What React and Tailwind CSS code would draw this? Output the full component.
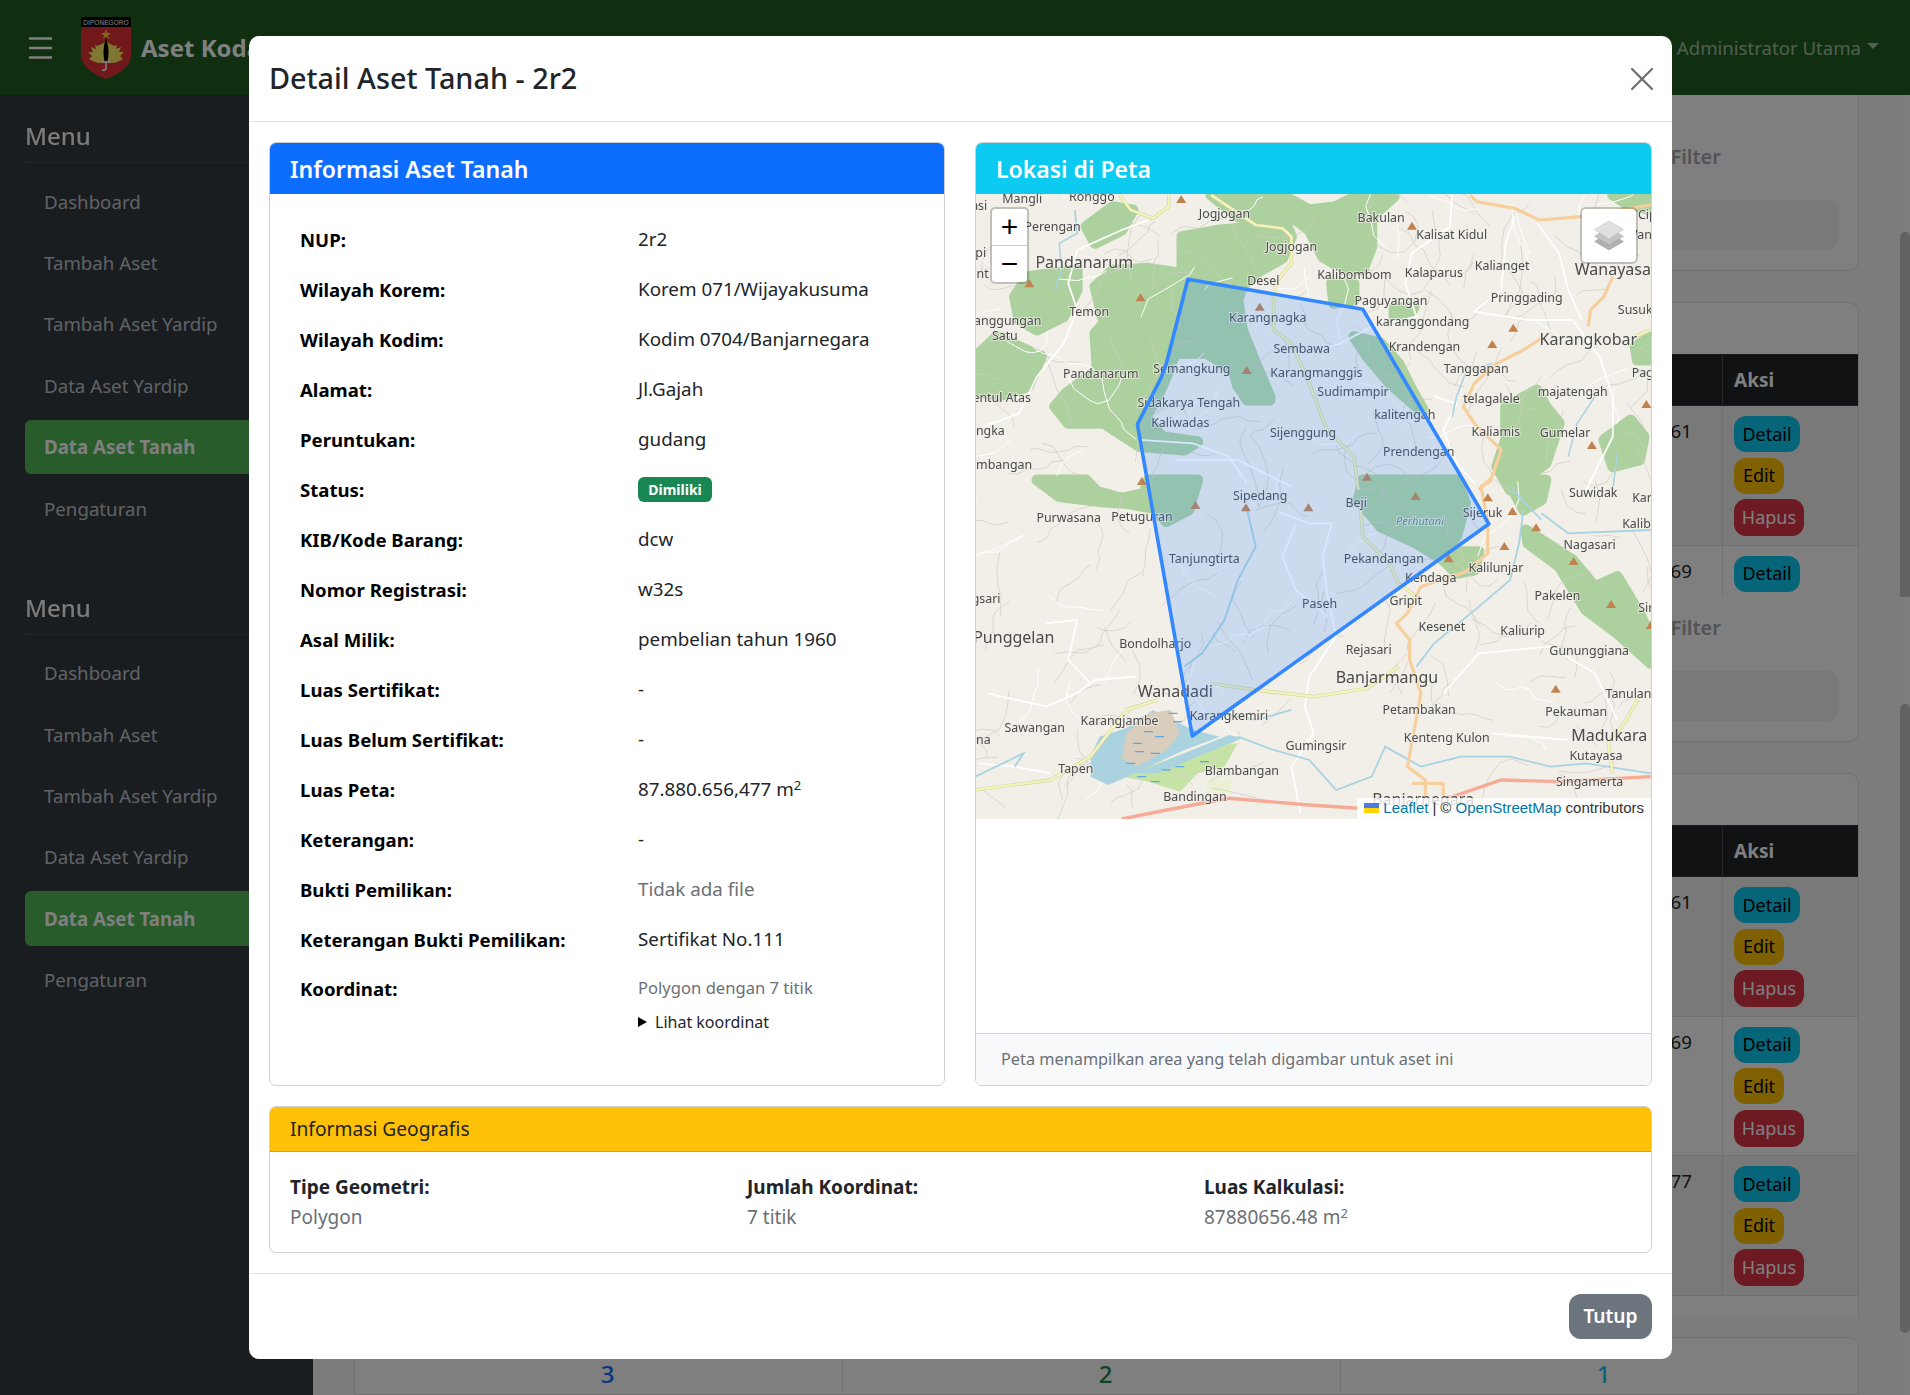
import React from 'react';
import { X } from 'lucide-react';

const menuItems = ['Dashboard', 'Tambah Aset', 'Tambah Aset Yardip', 'Data Aset Yardip', 'Data Aset Tanah', 'Pengaturan'];

const detailRows = [
  ['NUP:', '2r2'],
  ['Wilayah Korem:', 'Korem 071/Wijayakusuma'],
  ['Wilayah Kodim:', 'Kodim 0704/Banjarnegara'],
  ['Alamat:', 'Jl.Gajah'],
  ['Peruntukan:', 'gudang'],
  ['Status:', 'badge'],
  ['KIB/Kode Barang:', 'dcw'],
  ['Nomor Registrasi:', 'w32s'],
  ['Asal Milik:', 'pembelian tahun 1960'],
  ['Luas Sertifikat:', '-'],
  ['Luas Belum Sertifikat:', '-'],
  ['Luas Peta:', 'luas'],
  ['Keterangan:', '-'],
  ['Bukti Pemilikan:', 'nofile'],
  ['Keterangan Bukti Pemilikan:', 'Sertifikat No.111'],
];

// map helpers: the labels were read off two crops of the map
const x = (zx) => 970 + zx / 2.24;
const y2 = (zy) => 130 + zy / 3;
const y3 = (zy) => 480 + zy / 3;
const M2 = 'matrix(0.4464 0 0 0.3333 970 130)';
const M3 = 'matrix(0.4464 0 0 0.3333 970 480)';

const labels2 = [
  [117, 208, 'Mangli'], [273, 200, 'Ronggo'], [570, 253, 'Jogjogan'], [921, 264, 'Bakulan'], [1079, 315, 'Kalisat Kidul'],
  [185, 292, 'Perengan'], [720, 352, 'Jogjogan'], [861, 435, 'Kalibombom'], [1039, 430, 'Kalaparus'], [1192, 407, 'Kalianget'],
  [657, 452, 'Desel'], [943, 513, 'Paguyangan'], [1247, 505, 'Pringgading'], [267, 546, 'Temon'], [78, 572, 'Tanggungan'],
  [78, 619, 'Satu'], [1014, 575, 'karanggondang'], [667, 565, 'Karangnagka'], [1490, 541, 'Susuk'], [743, 658, 'Sembawa'],
  [1018, 651, 'Krandengan'], [1134, 716, 'Tanggapan'], [497, 716, 'Semangkung'], [776, 729, 'Karangmanggis'], [293, 733, 'Pandanarum'],
  [858, 787, 'Sudimampir'], [1350, 787, 'majatengah'], [1168, 808, 'telagalele'], [490, 818, 'Sidakarya Tengah'], [62, 803, 'Bentul Atas'],
  [974, 855, 'kalitengah'], [471, 878, 'Kaliwadas'], [746, 910, 'Sijenggung'], [1178, 906, 'Kaliamis'], [1333, 908, 'Gumelar'],
  [30, 903, 'Tungka'], [1005, 965, 'Prendengan'], [60, 1005, 'Kembangan'], [1522, 730, 'Pagak'], [1530, 255, 'Cipta'], [1530, 315, 'Wanasari'],
  [12, 228, 'Kasi'], [12, 368, 'Pipi'], [12, 432, 'Kent'],
];
const big2 = [[256, 395, 'Pandanarum'], [1440, 417, 'Wanayasa'], [1385, 628, 'Karangkobar']];
const labels3 = [
  [650, 47, 'Sipedang'], [1396, 40, 'Suwidak'], [865, 68, 'Beji'], [221, 115, 'Purwasana'], [385, 110, 'Petuguran'],
  [1148, 98, 'Sijeruk'], [1530, 132, 'Kalibening'], [1530, 55, 'Karang'], [1388, 195, 'Nagasari'], [525, 237, 'Tanjungtirta'],
  [927, 238, 'Pekandangan'], [1178, 263, 'Kalilunjar'], [1032, 295, 'Kendaga'], [1316, 348, 'Pakelen'], [976, 363, 'Gripit'],
  [20, 357, 'Pagsari'], [783, 373, 'Paseh'], [1057, 440, 'Kesenet'], [1238, 452, 'Kaliurip'], [415, 492, 'Bondolharjo'],
  [893, 511, 'Rejasari'], [1387, 512, 'Gununggiana'], [1475, 643, 'Tanulan'], [1006, 690, 'Petambakan'], [1358, 697, 'Pekauman'],
  [580, 707, 'Karangkemiri'], [335, 722, 'Karangjambe'], [145, 745, 'Sawangan'], [1068, 775, 'Kenteng Kulon'], [775, 798, 'Gumingsir'],
  [12, 780, 'Gana'], [1402, 828, 'Kutayasa'], [237, 868, 'Tapen'], [609, 873, 'Blambangan'], [1388, 905, 'Singamerta'], [504, 950, 'Bandingan'],
  [1530, 385, 'Sirau'],
];
const big3 = [[98, 470, 'Punggelan'], [934, 590, 'Banjarmangu'], [460, 633, 'Wanadadi'], [1432, 765, 'Madukara'], [1015, 958, 'Banjarnegara']];

const peaks = [
  [473, 207, 2], [990, 287, 2], [133, 460, 2], [382, 502, 2], [649, 530, 2], [1217, 593, 2], [1170, 642, 2], [620, 720, 2], [1515, 822, 2], [1393, 945, 2], [889, 1040, 2], [385, 1053, 2],
  [505, 75, 3], [618, 82, 3], [758, 82, 3], [998, 48, 3], [1160, 52, 3], [1215, 93, 3], [1268, 142, 3], [1197, 198, 3], [1072, 235, 3], [1352, 243, 3], [1436, 372, 3], [1312, 626, 3], [1525, 435, 3],
];

const forest2 = [
  'M475 320 L560 300 L640 290 L700 255 L720 320 L700 385 L640 430 L610 470 L600 510 L610 600 L640 700 L672 800 L600 770 L590 720 L530 670 L460 670 L440 740 L420 800 L395 860 L430 920 L510 935 L480 960 L380 950 L300 880 L220 880 L190 830 L215 790 L285 720 L280 610 L300 580 L280 470 L320 420 L400 415 L475 430 Z',
  'M130 440 L240 420 L240 480 L210 560 L150 600 L110 570 L100 500 Z',
  'M260 290 L320 230 L365 240 L340 300 L280 340 Z',
  'M540 195 L700 195 L760 240 L720 260 L660 290 L600 260 Z',
  'M820 230 L870 195 L950 200 L900 260 L900 350 L880 420 L840 420 L790 380 L760 300 L720 260 L760 240 Z',
  'M810 460 L860 460 L860 510 L815 520 Z',
  'M950 535 L995 530 L985 560 L950 560 Z',
  'M860 620 L920 640 L960 700 L990 780 L1020 850 L1000 830 L940 760 L890 680 Z',
  'M1200 830 L1270 780 L1290 830 L1320 880 L1290 1000 L1210 1080 L1180 1010 L1200 930 Z',
  'M1420 930 L1480 870 L1510 920 L1500 990 L1440 1010 Z',
  'M12 680 L60 620 L160 680 L130 770 L60 800 L12 780 Z',
  'M1440 195 L1525 195 L1525 240 L1470 220 Z',
  'M1490 650 L1525 620 L1525 690 L1495 690 Z',
  'M600 765 L650 770 L672 810 L620 810 Z',
];
const forest3 = [
  'M150 0 L260 0 L285 35 L340 55 L390 40 L400 0 L510 0 L490 90 L440 125 L410 85 L350 70 L290 65 L200 50 Z',
  'M880 0 L1090 0 L1110 70 L1090 170 L1060 215 L1140 215 L1130 270 L1090 280 L1060 240 L1000 190 L920 140 L870 60 Z',
  'M1245 150 L1350 240 L1400 320 L1450 290 L1500 400 L1525 470 L1525 550 L1450 460 L1380 390 L1320 260 L1250 190 Z',
  'M1205 0 L1290 0 L1280 60 L1240 90 Z',
];

// the tile has a dense net of village tracks, no need to trace them one by one
function makeTracks(count, seed, step) {
  let s = seed;
  const rnd = () => {
    s = (s * 16807) % 2147483647;
    return s / 2147483647;
  };
  const out = [];
  for (let i = 0; i < count; i++) {
    let px = 976 + rnd() * 675;
    let py = 194 + rnd() * 625;
    let dir = rnd() * Math.PI * 2;
    let d = `M${px.toFixed(1)} ${py.toFixed(1)}`;
    const n = 3 + Math.floor(rnd() * 4);
    for (let j = 0; j < n; j++) {
      dir += (rnd() - 0.5) * 1.5;
      const len = step * (0.5 + rnd());
      px += Math.cos(dir) * len;
      py += Math.sin(dir) * len;
      d += ` L${px.toFixed(1)} ${py.toFixed(1)}`;
    }
    out.push(d);
  }
  return out;
}
const grayTracks = makeTracks(190, 4711, 12);
const whiteTracks = makeTracks(50, 9127, 13);

const MapDrawing = () => (
  <svg viewBox="976 194 675 625" className="w-[675px] h-[625px] block blur-[0.3px]">
    <rect x="976" y="194" width="675" height="625" fill="#f2efe9" />

    {/* forest */}
    <g transform={M2} fill="#add19e" stroke="#add19e" strokeWidth="11" strokeLinejoin="round">
      {forest2.map((d, i) => <path key={i} d={d} vectorEffect="non-scaling-stroke" />)}
    </g>
    <g transform={M3} fill="#add19e" stroke="#add19e" strokeWidth="11" strokeLinejoin="round">
      {forest3.map((d, i) => <path key={i} d={d} vectorEffect="non-scaling-stroke" />)}
    </g>
    <g transform={M3}>
      <path d="M340 890 L420 850 L520 800 L600 790 L570 860 L510 880 L470 935 L400 905 Z" fill="#c6e3a6" />
      <path d="M530 900 L585 900 L585 940 L530 940 Z" fill="#eef0d5" />
    </g>

    {/* village tracks */}
    <g fill="none" stroke="#cfcbc3" strokeWidth="0.7">
      {grayTracks.map((d, i) => <path key={i} d={d} />)}
    </g>
    <g fill="none" stroke="#ffffff" strokeWidth="1">
      {whiteTracks.map((d, i) => <path key={i} d={d} />)}
    </g>

    {/* small roads */}
    <g transform={M2} fill="none" stroke="#ffffff" strokeWidth="1.8">
      <path vectorEffect="non-scaling-stroke" d="M400 270 L340 300 L240 360 L220 460 L240 540 L210 640 L150 740 L110 850 L30 890" />
      <path vectorEffect="non-scaling-stroke" d="M1080 195 L1075 290 L990 370 L975 460 L1000 560 L900 590 L830 640 L760 670" />
      <path vectorEffect="non-scaling-stroke" d="M1220 260 L1200 340 L1190 480 L1130 545 L1250 570 L1350 570 L1410 680 L1440 800 L1440 920 L1380 1080" />
      <path vectorEffect="non-scaling-stroke" d="M1270 280 L1320 370 L1340 480 L1370 570" />
      <path vectorEffect="non-scaling-stroke" d="M380 930 L500 940 L580 980 L620 1060 M460 990 L600 990 L720 1070" />
      <path vectorEffect="non-scaling-stroke" d="M1040 800 L1090 820 L1060 900 L1090 1000 L1130 1060" />
    </g>
    <g transform={M3} fill="none" stroke="#ffffff" strokeWidth="1.8">
      <path vectorEffect="non-scaling-stroke" d="M690 95 L760 130 L810 130 L790 230 L800 340 L820 470 L760 590 L750 680 L770 760 L720 860 L740 1000" />
      <path vectorEffect="non-scaling-stroke" d="M730 130 L700 230 L730 330 L800 410" />
      <path vectorEffect="non-scaling-stroke" d="M20 850 L100 860 L180 880 M40 640 L170 680 L240 640 L280 600 L370 590 M170 430 L240 420 L220 540 L270 610" />
      <path vectorEffect="non-scaling-stroke" d="M1060 640 L1140 520 L1300 500 L1400 580 L1450 720 M1170 760 L1340 780 M1430 790 L1440 880" />
    </g>

    {/* rivers */}
    <g transform={M2} fill="none" stroke="#a8d3e0" strokeWidth="1.6">
      <path vectorEffect="non-scaling-stroke" d="M235 240 L240 310 L200 340 L205 420 L190 480" />
      <path vectorEffect="non-scaling-stroke" d="M1170 700 L1110 730 L1090 800 L1080 860 M1400 800 L1360 880 L1340 980 M1450 970 L1440 1080" />
    </g>
    <g transform={M3} fill="none" stroke="#a8d3e0" strokeWidth="1.8">
      <path vectorEffect="non-scaling-stroke" d="M620 85 L640 200 L600 300 L570 420 L520 520 L480 560" />
      <path vectorEffect="non-scaling-stroke" d="M1240 90 L1230 190 L1210 300 L1140 380 L1040 490 L1000 560" />
      <path vectorEffect="non-scaling-stroke" d="M1280 100 L1340 160 L1525 150 M1210 20 L1280 120" />
      <path vectorEffect="non-scaling-stroke" d="M600 770 L680 810 L760 840 L820 930 L900 890 L930 800 L1010 860 L1100 830 L1210 830 L1300 860 L1380 850 L1525 880" />
      <path vectorEffect="non-scaling-stroke" d="M12 890 L120 820 L100 860 M560 700 L640 720 L720 690" />
    </g>

    {/* reservoir */}
    <g transform={M3}>
      <path fill="#aad3df" d="M290 770 L350 745 L410 690 L500 750 L560 770 L480 810 L370 880 L310 915 L270 890 L270 830 Z" />
      <path fill="#aad3df" d="M370 880 L580 765 L610 775 L420 880 Z" />
      <path fill="#d9cdbd" d="M350 760 L400 700 L450 690 L470 760 L440 810 L375 860 L340 835 Z" />
      <g fill="none" stroke="#5aa8ea" strokeWidth="1.2">
        <path vectorEffect="non-scaling-stroke" d="M365 790 H385 M390 755 H410 M415 770 H435 M370 815 H390 M405 820 H425 M350 850 H370 M445 700 H465 M455 725 H475 M375 890 H395 M405 905 H425 M430 870 H450 M515 845 H535 M460 860 H480" />
      </g>
    </g>

    {/* yellow roads */}
    <g fill="none" strokeLinejoin="round">
      {[
        [M2, 'M335 195 L360 240 L410 265 L445 230 L445 195'],
        [M2, 'M540 195 L640 285 L700 295 L720 320 L720 400 L690 450 L680 490 L680 600 L720 640 L760 760 L800 900 L860 980 L870 1080'],
        [M3, 'M875 80 L880 170 L940 250 L960 310 L1000 350'],
        [M3, 'M12 930 L180 900 L270 830 L350 690 L420 660'],
        [M3, 'M540 610 L640 630 L770 650 L890 625 L960 560'],
        [M3, 'M1500 650 L1470 720 L1430 790 L1440 880'],
        [M2, 'M1490 620 L1525 600'],
      ].map(([m, d], i) => (
        <g key={i} transform={m}>
          <path vectorEffect="non-scaling-stroke" d={d} stroke="#d5d2a0" strokeWidth="3.4" />
          <path vectorEffect="non-scaling-stroke" d={d} stroke="#f4f6bb" strokeWidth="2.2" />
        </g>
      ))}
    </g>

    {/* orange and salmon roads */}
    <g fill="none" stroke="#f7cf9c" strokeWidth="3.2" strokeLinejoin="round">
      <path transform={M2} vectorEffect="non-scaling-stroke" d="M1120 195 L1135 215 L1220 235 L1275 270 L1370 260 L1525 225" />
      <path transform={M2} vectorEffect="non-scaling-stroke" d="M1440 440 L1420 500 L1390 540 L1385 590" />
      <path transform={M2} vectorEffect="non-scaling-stroke" d="M1280 625 L1240 660 L1180 700 L1130 760 L1105 830 L1130 880 L1190 960 L1170 1040 L1140 1080" />
      <path transform={M3} vectorEffect="non-scaling-stroke" d="M1170 0 L1145 20 L1160 130 L1160 220 L1110 275 L1010 320 L980 400 L955 430 L985 480 L985 540 L1010 640 L995 750 L980 860 L1020 900 L1020 980" />
      <path transform={M3} vectorEffect="non-scaling-stroke" d="M990 910 H1060 L1060 980" />
    </g>
    <g fill="none" stroke="#f5ab96" strokeWidth="3.4">
      <path transform={M3} vectorEffect="non-scaling-stroke" d="M340 1017 L440 990 L580 955 L760 975 L870 985" />
      <path transform={M3} vectorEffect="non-scaling-stroke" d="M1060 960 L1190 900 L1320 905 L1525 890" />
    </g>

    {/* peaks */}
    {peaks.map(([zx, zy, part], i) => {
      const px = x(zx);
      const py = part === 2 ? y2(zy) : y3(zy);
      return <polygon key={i} points={`${px - 5},${py + 4} ${px + 5},${py + 4} ${px},${py - 4}`} fill="#c0834f" />;
    })}

    {/* labels */}
    <g fontFamily="'Noto Sans', sans-serif" textAnchor="middle" fill="#4a4a48" stroke="#f2efe9" strokeOpacity="0.75" strokeWidth="2" paintOrder="stroke">
      {labels2.map(([zx, zy, t], i) => (
        <text key={i} x={x(zx)} y={y2(zy) + 4} fontSize="12.4">{t}</text>
      ))}
      {labels3.map(([zx, zy, t], i) => (
        <text key={i} x={x(zx)} y={y3(zy) + 4} fontSize="12.4">{t}</text>
      ))}
      {big2.map(([zx, zy, t], i) => (
        <text key={i} x={x(zx)} y={y2(zy) + 6} fontSize="16">{t}</text>
      ))}
      {big3.map(([zx, zy, t], i) => (
        <text key={i} x={x(zx)} y={y3(zy) + 6} fontSize="16">{t}</text>
      ))}
      <text x={x(1008)} y={y3(122) + 4} fontSize="11" fontStyle="italic" fill="#5f8f78">Perhutani</text>
    </g>

    {/* area polygon */}
    <polygon
      points="1187.9,279.3 1362.9,309.3 1488.8,524 1192.3,736 1137.4,424.3 1161,378 1166.4,363.3"
      fill="#3388ff"
      fillOpacity="0.2"
      stroke="#3388ff"
      strokeWidth="3.6"
      strokeLinejoin="round"
    />
  </svg>
);

const Logo = () => (
  <svg viewBox="0 0 50 62" className="w-[50px] h-[62px] shrink-0">
    <rect width="50" height="10" fill="#000000" />
    <text x="25" y="7.5" textAnchor="middle" fontSize="6.6" fill="#ffffff" fontFamily="'Liberation Sans', sans-serif">DIPONEGORO</text>
    <path d="M0 10 H50 V40 Q47 54 25 62 Q3 54 0 40 Z" fill="#e23234" />
    <polygon points="25,12 26.4,16 30,16 27,18.4 28.2,22 25,19.8 21.8,22 23,18.4 20,16 23.6,16" fill="#ffc93c" />
    <path d="M25 24 C29 27 33 30 36 28 L35 32 L40 30 L38 35 L43 35 L39 39 L42 42 C35 47 29 46 25 45 C21 46 15 47 8 42 L11 39 L7 35 L12 35 L10 30 L15 32 L14 28 C17 30 21 27 25 24 Z" fill="#ffee66" />
    <path d="M25 21 C28 30 28 38 26.5 44 H23.5 C22 38 22 30 25 21 Z" fill="#000000" />
    <path d="M20 45 H30 M25 45 V51 Q25 54 21 53" fill="none" stroke="#ffffff" strokeWidth="1.6" />
  </svg>
);

const LayersIcon = () => (
  <svg viewBox="0 0 40 36" className="w-[34px] h-[31px]">
    <path d="M20 15 L37 25 L20 35 L3 25 Z" fill="#b0b0b0" stroke="#9a9a9a" strokeWidth="0.6" />
    <path d="M20 9 L37 19 L20 29 L3 19 Z" fill="#c4c4c4" stroke="#a4a4a4" strokeWidth="0.6" />
    <path d="M20 1 L37 11 L20 22 L3 11 Z" fill="#e0e0e0" stroke="#b8b8b8" strokeWidth="0.6" />
  </svg>
);

function SidebarGroup() {
  return (
    <div className="mb-[54px]">
      <h5 className="text-[24px] leading-[36px] font-medium text-[#ffffff] opacity-[0.95] pb-[8px] border-b border-white/10 mb-[11px]">Menu</h5>
      <ul className="flex flex-col gap-[6.8px]">
        {menuItems.map((item) => (
          <li
            key={item}
            className={
              item === 'Data Aset Tanah'
                ? 'h-[54.6px] flex items-center pl-[19px] rounded-l-[6px] text-[18.7px] font-bold text-white bg-[#50b854]'
                : 'h-[54.6px] flex items-center pl-[19px] text-[18.7px] text-[#c0c6cc]'
            }
          >
            {item}
          </li>
        ))}
      </ul>
    </div>
  );
}

function FilterCard({ height }) {
  return (
    <div style={{ height }} className="shrink-0 bg-white border-x border-b border-[#dee2e6] rounded-b-[10px] flex flex-col justify-end px-[20px] pb-[20px]">
      <div className="text-right pr-[117px] text-[20px] font-semibold text-[#a4a7ad] mb-[29px] leading-[28px]">Filter</div>
      <div className="h-[50px] rounded-[10px] bg-[#f2f2f2]" />
    </div>
  );
}

function ActionButtons({ edit = true }) {
  return (
    <div className="flex flex-col items-start gap-[5.5px]">
      <span className="h-[36px] w-[66px] flex items-center justify-center rounded-[12px] bg-[#0dcaf0] text-[18px] text-black">Detail</span>
      {edit && <span className="h-[36px] w-[50px] flex items-center justify-center rounded-[12px] bg-[#ffc107] text-[18px] text-black">Edit</span>}
      {edit && <span className="h-[37px] w-[70px] flex items-center justify-center rounded-[12px] bg-[#dc3545] text-[18px] text-white">Hapus</span>}
    </div>
  );
}

function DataRow({ value, striped, edit }) {
  return (
    <div className={`h-[139.7px] flex border-b border-[#dee2e6] ${striped ? 'bg-[#f2f2f2]' : 'bg-white'}`}>
      <div className="flex-1 pt-[11px] pr-[30px] text-right text-[18.7px] leading-[28px] text-[#212529]">{value}</div>
      <div className="w-[136px] border-l border-[#dee2e6] pl-[11px] pt-[10px]">
        <ActionButtons edit={edit} />
      </div>
    </div>
  );
}

function TableCard({ children, height }) {
  return (
    <div style={{ height }} className="shrink-0 mt-[31px] bg-white border-x border-t border-[#dee2e6] rounded-t-[10px] overflow-hidden pt-[51px]">
      <div className="h-[52px] flex bg-[#212529] border-y border-[#32383e]">
        <div className="flex-1" />
        <div className="w-[136px] border-l border-[#4d5154] pl-[11px] pt-[1px] flex items-center text-[19px] font-bold text-white">Aksi</div>
      </div>
      {children}
    </div>
  );
}

function Modal() {
  return (
    <div className="absolute left-[249px] top-[36px] w-[1423px] h-[1323px] bg-white rounded-[10px] flex flex-col overflow-hidden text-[#212529]">
      {/* modal header */}
      <div className="h-[85.5px] shrink-0 flex items-center justify-between pl-[20px] pr-[10px] pt-[1px] border-b border-[#dee2e6]">
        <h5 className="text-[28.8px] font-medium leading-none">Detail Aset Tanah - 2r2</h5>
        <X className="w-[40px] h-[40px] text-[#6d6d6d]" strokeWidth={1.3} />
      </div>

      {/* modal body */}
      <div className="flex-1 px-[20px] pt-[20.5px] flex flex-col">
        <div className="flex gap-[30px] h-[944px]">
          {/* info card */}
          <div className="w-[676px] border border-[#ced1d4] rounded-[7px] overflow-hidden flex flex-col">
            <div className="h-[50.5px] shrink-0 bg-[#0d6efd] px-[20px] pt-[1px] flex items-center text-[23px] font-semibold text-white">Informasi Aset Tanah</div>
            <div className="pt-[21px] pl-[30px]">
              {detailRows.map(([label, value]) => (
                <div key={label} className="h-[50px] flex items-center text-[18.8px]">
                  <div className="w-[338px] text-[18.6px] font-bold text-black">{label}</div>
                  {value === 'badge' ? (
                    <span className="h-[25px] w-[74px] rounded-[6px] bg-[#198754] text-white text-[14px] font-bold flex items-center justify-center">Dimiliki</span>
                  ) : value === 'nofile' ? (
                    <div className="text-[#6c7075]">Tidak ada file</div>
                  ) : value === 'luas' ? (
                    <div>87.880.656,477 m<sup className="text-[13px]">2</sup></div>
                  ) : (
                    <div>{value}</div>
                  )}
                </div>
              ))}
              <div className="flex pt-[10.5px] text-[18.6px]">
                <div className="w-[338px] font-bold text-black">Koordinat:</div>
                <div>
                  <div className="text-[16.6px] text-[#6c7075] leading-[26px]">Polygon dengan 7 titik</div>
                  <div className="text-[16px] leading-[26px] mt-[7.5px] flex items-center text-[#212529]">
                    <span className="w-0 h-0 border-y-[5px] border-y-transparent border-l-[9px] border-l-black mr-[8px]" />
                    Lihat koordinat
                  </div>
                </div>
              </div>
            </div>
          </div>

          {/* map card */}
          <div className="w-[677px] border border-[#ced1d4] rounded-[7px] overflow-hidden flex flex-col">
            <div className="h-[50.5px] shrink-0 bg-[#0dcaf0] px-[20px] pt-[1px] flex items-center text-[23px] font-semibold text-white">Lokasi di Peta</div>
            <div className="relative h-[625px] shrink-0 overflow-hidden">
              <MapDrawing />
              {/* zoom control */}
              <div className="absolute left-[14px] top-[13px] w-[39px] h-[77px] bg-white rounded-[5px] border-2 border-black/20 bg-clip-padding flex flex-col">
                <div className="flex-1 flex items-center justify-center border-b border-[#ccc] text-[30px] leading-none font-['Liberation_Sans',sans-serif] text-black">+</div>
                <div className="flex-1 flex items-center justify-center text-[30px] leading-none font-['Liberation_Sans',sans-serif] text-black">−</div>
              </div>
              {/* layers control */}
              <div className="absolute left-[604px] top-[13px] w-[58px] h-[57px] bg-white rounded-[6px] border-2 border-black/20 bg-clip-padding flex items-center justify-center">
                <LayersIcon />
              </div>
              {/* attribution */}
              <div className="absolute right-0 bottom-0 h-[21px] pl-[7px] pr-[7px] bg-white/80 flex items-center text-[15px] text-[#333] font-['Liberation_Sans',sans-serif]">
                <svg viewBox="0 0 12 8" className="w-[15px] h-[10px] mr-[4px]">
                  <rect width="12" height="4" fill="#4C7BE1" />
                  <rect y="4" width="12" height="4" fill="#FFD500" />
                </svg>
                <span className="text-[#0078a8]">Leaflet</span>
                <span className="mx-[4px]">|</span>
                <span>©&nbsp;</span>
                <span className="text-[#0078a8]">OpenStreetMap</span>
                <span>&nbsp;contributors</span>
              </div>
            </div>
            <div className="flex-1" />
            <div className="h-[52px] shrink-0 bg-[#f8f9fa] border-t border-[#ced1d4] pl-[25px] flex items-center text-[16.3px] text-[#6c7075]">
              Peta menampilkan area yang telah digambar untuk aset ini
            </div>
          </div>
        </div>

        {/* geo card */}
        <div className="mt-[20px] h-[147px] border border-[#ced1d4] rounded-[7px] overflow-hidden flex flex-col">
          <div className="h-[45px] shrink-0 bg-[#ffc107] border-b border-[#d9a406] px-[20px] flex items-center text-[19.2px] text-[#212529]">Informasi Geografis</div>
          <div className="flex pl-[20px] pt-[20px]">
            <div className="w-[457px]">
              <div className="text-[19px] font-bold leading-[30px]">Tipe Geometri:</div>
              <div className="text-[19px] text-[#6c7075] leading-[30px]">Polygon</div>
            </div>
            <div className="w-[457px]">
              <div className="text-[19px] font-bold leading-[30px]">Jumlah Koordinat:</div>
              <div className="text-[19px] text-[#6c7075] leading-[30px]">7 titik</div>
            </div>
            <div>
              <div className="text-[19px] font-bold leading-[30px]">Luas Kalkulasi:</div>
              <div className="text-[19px] text-[#6c7075] leading-[30px]">87880656.48 m<sup className="text-[13px]">2</sup></div>
            </div>
          </div>
        </div>
      </div>

      {/* modal footer */}
      <div className="h-[86px] shrink-0 border-t border-[#dee2e6] flex items-center justify-end pr-[20px]">
        <button className="h-[45px] w-[83px] rounded-[12px] bg-[#6c757d] text-white text-[19.2px] font-semibold">Tutup</button>
      </div>
    </div>
  );
}

export default function App() {
  return (
    <div className="relative w-[1910px] h-[1395px] overflow-hidden flex flex-col font-['Noto_Sans',sans-serif]">
      {/* navbar */}
      <header className="h-[95px] shrink-0 bg-[#1e5e20] flex items-center pl-[29px] pr-[31px]">
        <svg viewBox="0 0 23 22" className="w-[23px] h-[22px]">
          <path d="M0 1.5 H23 M0 11 H23 M0 20.5 H23" stroke="#ffffff" strokeWidth="2.6" fill="none" />
        </svg>
        <div className="ml-[29px]"><Logo /></div>
        <span className="ml-[10px] pt-[1px] text-[24px] font-bold text-white">Aset Kodam</span>
        <div className="ml-auto pt-[1px] flex items-center text-[18.6px] text-white/60">
          Administrator Utama
          <span className="ml-[6px] mb-[4px] w-0 h-0 border-x-[6px] border-x-transparent border-t-[6px] border-t-white/60" />
        </div>
      </header>

      <div className="flex-1 flex min-h-0">
        {/* sidebar */}
        <aside className="w-[313px] shrink-0 bg-[#343a40] pl-[25px] pt-[23.3px]">
          <SidebarGroup />
          <SidebarGroup />
        </aside>

        {/* page content, only its edges show past the modal */}
        <main className="flex-1 min-w-0 bg-[#f8f9fa] px-[41px] overflow-hidden flex flex-col">
          <FilterCard height={176} />
          <TableCard height={294}>
            <DataRow value="61" striped edit />
            <DataRow value="69" edit={false} />
          </TableCard>
          <FilterCard height={146} />
          <TableCard height={543}>
            <DataRow value="61" striped edit />
            <DataRow value="69" edit />
            <DataRow value="77" striped edit />
          </TableCard>
          <div className="shrink-0 mt-[21px] flex-1 bg-white border border-[#dee2e6] rounded-t-[10px] grid grid-cols-[488px_498px_1fr] items-end pb-[2px] text-[24px] font-medium">
            <div className="text-center pl-[18px] text-[#0d6efd] border-r border-[#dee2e6] h-full flex items-end justify-center">3</div>
            <div className="text-center pl-[28px] text-[#198754] border-r border-[#dee2e6] h-full flex items-end justify-center">2</div>
            <div className="text-center pl-[8px] text-[#0dcaf0] h-full flex items-end justify-center">1</div>
          </div>
        </main>

        {/* window scrollbars */}
        <div className="w-[10px] shrink-0 bg-[#fbfbfd] flex flex-col">
          <div className="h-[137px]" />
          <div className="h-[365px] bg-[#c4c4c4] rounded-t-[5px]" />
          <div className="h-[107px]" />
          <div className="h-[629px] bg-[#c4c4c4] rounded-[5px]" />
        </div>
      </div>

      {/* modal backdrop */}
      <div className="absolute inset-0 bg-black/50" />
      <Modal />
    </div>
  );
}
